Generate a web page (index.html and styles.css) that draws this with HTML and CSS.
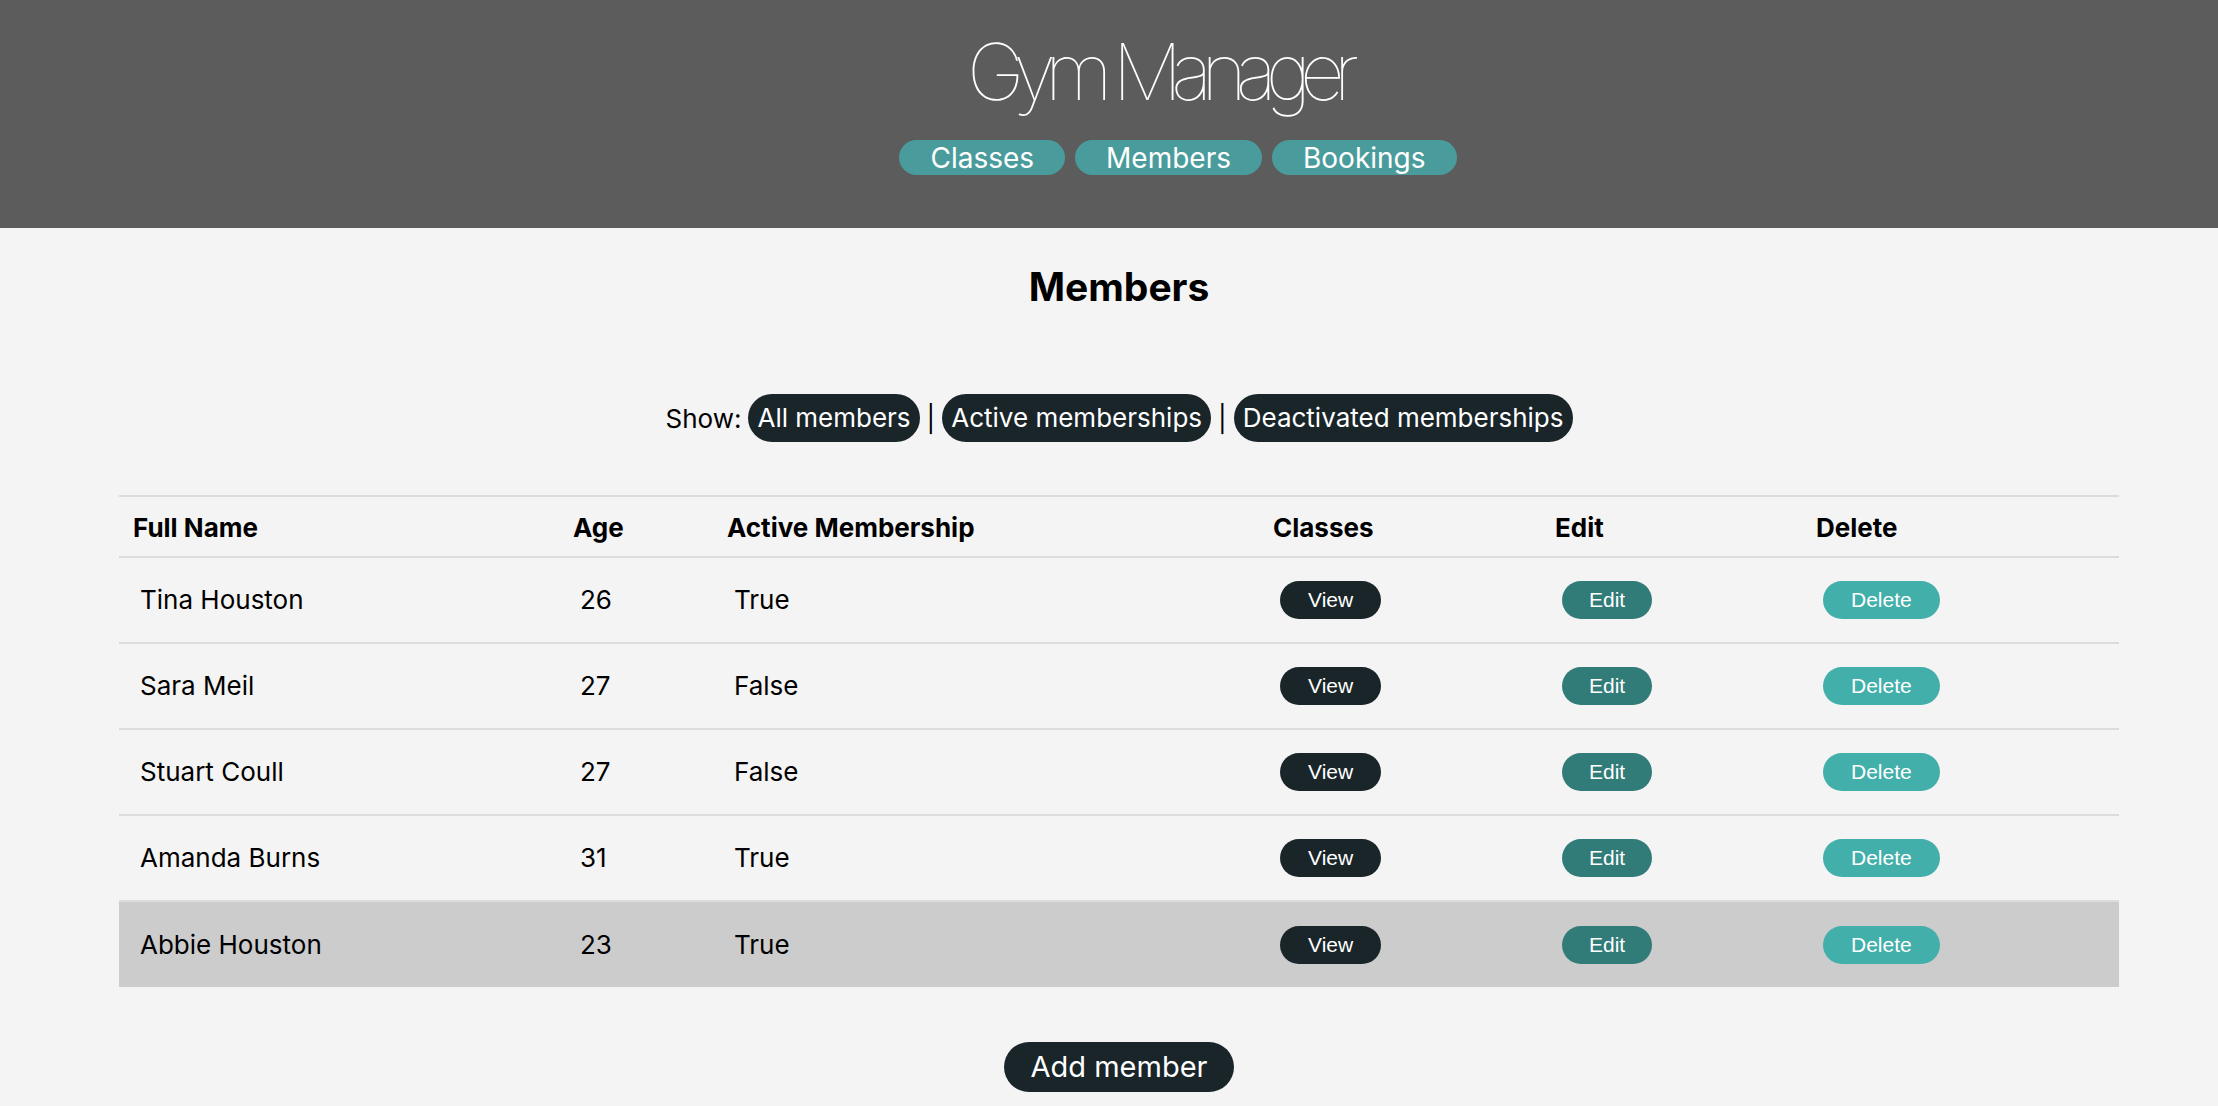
FILE: index.html
```html
<!DOCTYPE html>
<html lang="en">
<head>
<meta charset="utf-8">
<title>Gym Manager</title>
<link rel="stylesheet" href="styles.css">
</head>
<body>
<header class="site-header">
  <h1 class="brand">Gym Manager</h1>
  <nav class="main-nav">
    <a class="nav-pill" href="#">Classes</a>
    <a class="nav-pill" href="#">Members</a>
    <a class="nav-pill" href="#">Bookings</a>
  </nav>
</header>
<main class="content">
  <h2 class="page-title">Members</h2>
  <div class="filters">
    <span class="filter-label">Show:</span>
    <a class="filter-pill" href="#">All members</a>
    <span class="sep">|</span>
    <a class="filter-pill" href="#">Active memberships</a>
    <span class="sep">|</span>
    <a class="filter-pill" href="#">Deactivated memberships</a>
  </div>
  <table class="members">
    <colgroup>
      <col class="c-name"><col class="c-age"><col class="c-active"><col class="c-classes"><col class="c-edit"><col class="c-delete">
    </colgroup>
    <thead>
      <tr><th>Full Name</th><th>Age</th><th>Active Membership</th><th>Classes</th><th>Edit</th><th>Delete</th></tr>
    </thead>
    <tbody>
      <tr><td>Tina Houston</td><td>26</td><td>True</td><td><a class="btn btn-view" href="#">View</a></td><td><a class="btn btn-edit" href="#">Edit</a></td><td><a class="btn btn-delete" href="#">Delete</a></td></tr>
      <tr><td>Sara Meil</td><td>27</td><td>False</td><td><a class="btn btn-view" href="#">View</a></td><td><a class="btn btn-edit" href="#">Edit</a></td><td><a class="btn btn-delete" href="#">Delete</a></td></tr>
      <tr><td>Stuart Coull</td><td>27</td><td>False</td><td><a class="btn btn-view" href="#">View</a></td><td><a class="btn btn-edit" href="#">Edit</a></td><td><a class="btn btn-delete" href="#">Delete</a></td></tr>
      <tr><td>Amanda Burns</td><td>31</td><td>True</td><td><a class="btn btn-view" href="#">View</a></td><td><a class="btn btn-edit" href="#">Edit</a></td><td><a class="btn btn-delete" href="#">Delete</a></td></tr>
      <tr class="is-hover"><td>Abbie Houston</td><td>23</td><td>True</td><td><a class="btn btn-view" href="#">View</a></td><td><a class="btn btn-edit" href="#">Edit</a></td><td><a class="btn btn-delete" href="#">Delete</a></td></tr>
    </tbody>
  </table>
  <div class="actions">
    <a class="add-btn" href="#">Add member</a>
  </div>
</main>
</body>
</html>
```

FILE: styles.css
```css
* { box-sizing: border-box; }
html, body { margin: 0; padding: 0; }
body {
  background: #f4f4f4;
  color: #000;
  font-family: Inter, "Noto Sans", sans-serif;
  height: 1106px;
  overflow: hidden;
}
a { text-decoration: none; }

.site-header {
  background: #5c5c5c;
  height: 228px;
  padding-top: 33px;
  display: flex;
  flex-direction: column;
  align-items: center;
}
.brand {
  margin: 0;
  padding-left: 97px;
  font-family: Inter, sans-serif;
  font-weight: 100;
  font-size: 78px;
  line-height: 78px;
  letter-spacing: -11px;
  color: #fff;
}
.main-nav {
  margin-top: 29px;
  padding-left: 138px;
  display: flex;
  gap: 10px;
}
.nav-pill {
  display: block;
  height: 35px;
  line-height: 37px;
  padding: 0 31px;
  border-radius: 18px;
  background: #4a9c9c;
  color: #fff;
  font-size: 28px;
}

.content {
  padding: 39px 99px 0 119px;
}
.page-title {
  margin: 0;
  text-align: center;
  font-size: 39px;
  line-height: 40px;
  font-weight: 700;
}
.filters {
  margin-top: 87px;
  display: flex;
  justify-content: center;
  align-items: center;
  gap: 7px;
  font-size: 26px;
}
.filter-pill {
  display: block;
  height: 48px;
  line-height: 48px;
  padding: 0 9px;
  border-radius: 24px;
  background: #1a252a;
  color: #fff;
}
.sep { font-size: 26px; }

.members {
  margin-top: 53px;
  width: 100%;
  table-layout: fixed;
  border-collapse: collapse;
  border-top: 2px solid #dcdcdc;
}
.c-name { width: 440px; }
.c-age { width: 154px; }
.c-active { width: 546px; }
.c-classes { width: 282px; }
.c-edit { width: 261px; }
.c-delete { width: 317px; }

.members th {
  text-align: left;
  font-size: 26px;
  font-weight: 700;
  line-height: 32px;
  padding: 15px 14px 12px;
  border-bottom: 2px solid #dcdcdc;
}
.members td {
  font-size: 26px;
  line-height: 32px;
  height: 86px;
  padding: 0 14px 0 21px;
  vertical-align: middle;
  border-bottom: 2px solid #dcdcdc;
}
.members tr:last-child td { border-bottom: none; }
.members tr.is-hover td { background: #cccccc; }

.btn {
  display: block;
  width: fit-content;
  height: 38px;
  line-height: 38px;
  padding: 0 28px;
  border-radius: 19px;
  font-family: "Liberation Sans", Arial, sans-serif;
  font-size: 21px;
  color: #fff;
}
.btn-view { background: #1a252a; }
.btn-edit { background: #317b78; padding: 0 27px; }
.btn-delete { background: #43afaa; }

.actions {
  margin-top: 55px;
  display: flex;
  justify-content: center;
}
.add-btn {
  display: block;
  height: 50px;
  line-height: 50px;
  padding: 0 27px;
  border-radius: 25px;
  background: #1a252a;
  color: #fff;
  font-size: 29px;
}
```
